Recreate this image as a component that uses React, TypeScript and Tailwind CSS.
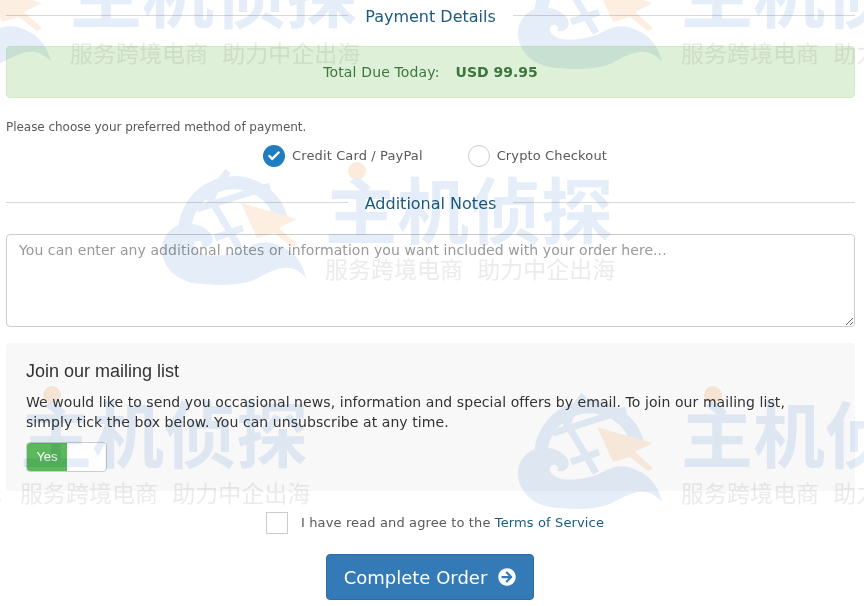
import { Check } from 'lucide-react'
import { FaArrowCircleRight } from 'react-icons/fa'

const verdana = "font-['DejaVu_Sans',sans-serif]"

// watermark spots, logo's top left corner in page pixels
const stamps = [
  { x: -93, y: -57 },
  { x: 518, y: -57 },
  { x: 162, y: 159 },
  { x: -143, y: 383 },
  { x: 518, y: 383 },
]

function Stamp({ x, y }: { x: number; y: number }) {
  return (
    <div className="absolute w-[460px] h-[130px]" style={{ left: x, top: y }}>
      <svg width="146" height="126" viewBox="0 0 146 126" className="absolute left-0 top-0" fill="none">
        <path d="M24 84 A47 47 0 1 1 120 62" stroke="#e5eef8" strokeWidth="13" />
        <path d="M41 27 L78 90 M66 12 C56 24 50 36 47 48 M35 50 L108 27 M53 79 L81 69" stroke="#e5eef8" strokeWidth="7" />
        <path
          d="M144 119 C141 104 132 90 110 84 C96 81 88 88 78 92 C66 96 48 99 38 94 C30 90 30 82 36 82 C40 82 41 86 39 88 C48 90 54 82 49 75 C42 66 30 63 20 65 C8 68 0 78 0 90 C0 110 18 125 42 125 C62 127 80 126 94 120 C110 112 128 100 144 119 Z"
          fill="#e5eef8"
        />
        <path d="M79 44 L135 60 L117 69 L135 85 L130 88 L112 74 L95 79 Z" fill="#fcefe2" />
      </svg>
      <span className="absolute left-[186px] top-[3px] h-[18px] w-[18px] rounded-full bg-[#fcebda]" />
      <div className="absolute left-[163px] top-[-2px] whitespace-nowrap text-[72px] leading-[100px] font-bold text-[#e5eef8] font-['Noto_Sans_CJK_SC',sans-serif]">
        主机侦探
      </div>
      <div className="absolute left-[163px] top-[96px] whitespace-nowrap text-[23px] leading-[26px] [word-spacing:9px] text-[#ebebeb] font-['Noto_Sans_CJK_SC',sans-serif]">
        服务跨境电商 助力中企出海
      </div>
    </div>
  )
}

function SectionTitle({ children }: { children: string }) {
  return (
    <div className="flex items-center">
      <div className="mb-[4px] h-px flex-1 bg-[#d8d8d8]" />
      <h2 className={`px-[17px] text-[16px] leading-[22px] text-[#1b5a7d] ${verdana}`}>{children}</h2>
      <div className="mb-[4px] h-px flex-1 bg-[#d8d8d8]" />
    </div>
  )
}

export default function App() {
  return (
    <div className={`relative h-[606px] w-[864px] overflow-hidden bg-white pl-[6px] pr-[9px] pt-[6px] text-[#58595b] ${verdana}`}>
      <SectionTitle>Payment Details</SectionTitle>

      <div className="mt-[18px] flex h-[52px] items-center justify-center gap-4 rounded border border-[#d6e9c6] bg-[#dff0d8] text-[14px] text-[#3c763d]">
        <span className="tracking-[0.15px]">Total Due Today:</span>
        <strong className="font-bold">USD 99.95</strong>
      </div>

      <p className="mt-[20px] text-[12px] leading-[18px] tracking-[-0.04px]">Please choose your preferred method of payment.</p>

      <div className="mt-[9px] flex justify-center gap-[45px] pl-[9px] text-[13px] leading-[22px] tracking-[0.13px]">
        <label className="flex items-center gap-[7px]">
          <span className="flex h-[22px] w-[22px] items-center justify-center rounded-full bg-[#1f7dc0]">
            <Check size={14} strokeWidth={4} color="#ffffff" />
          </span>
          Credit Card / PayPal
        </label>
        <label className="flex items-center gap-[7px]">
          <span className="h-[22px] w-[22px] rounded-full border border-[#cccccc] bg-white" />
          Crypto Checkout
        </label>
      </div>

      <div className="mt-[26px]">
        <SectionTitle>Additional Notes</SectionTitle>
      </div>

      <textarea
        className={`mt-[19px] block h-[93px] w-full rounded border border-[#cccccc] bg-transparent px-3 py-[5px] text-[14px] leading-[20px] tracking-[0.07px] placeholder:text-[#999999] ${verdana}`}
        placeholder="You can enter any additional notes or information you want included with your order here..."
      />

      <div className="mt-[16px] h-[148px] rounded bg-[#f8f8f8] px-5 pt-[17px]">
        <h3 className="text-[18px] leading-[22px] text-[#333333] font-['Liberation_Sans',sans-serif]">Join our mailing list</h3>
        <p className="mt-[10px] text-[14px] leading-[20px] tracking-[0.07px] text-[#333333]">
          We would like to send you occasional news, information and special offers by email. To join our mailing list, simply tick the box below. You can unsubscribe at any time.
        </p>
        <div className="mt-[10px] flex h-[30px] w-[81px] overflow-hidden rounded border border-[#cccccc] bg-white">
          <span className="flex w-[40px] items-center justify-center bg-[#5cb85c] text-[13px] text-white font-['Liberation_Sans',sans-serif]">Yes</span>
        </div>
      </div>

      <div className="mt-[21px] flex items-center justify-center gap-[13px] pl-[9px] text-[13px] tracking-[0.13px]">
        <span className="h-[22px] w-[22px] border border-[#cccccc] bg-white" />
        <span>
          I have read and agree to the <a className="text-[#1b5a7d]">Terms of Service</a>
        </span>
      </div>

      <div className="mt-[20px] flex justify-center pr-[1px]">
        <button className="flex h-[46px] w-[208px] items-center justify-center gap-[11px] rounded border border-[#2e6da4] bg-[#337ab7] text-[18px] text-white">
          Complete Order
          <FaArrowCircleRight size={18} />
        </button>
      </div>

      <div className="pointer-events-none absolute inset-0 mix-blend-multiply">
        {stamps.map((s) => (
          <Stamp key={`${s.x}-${s.y}`} x={s.x} y={s.y} />
        ))}
      </div>
    </div>
  )
}
